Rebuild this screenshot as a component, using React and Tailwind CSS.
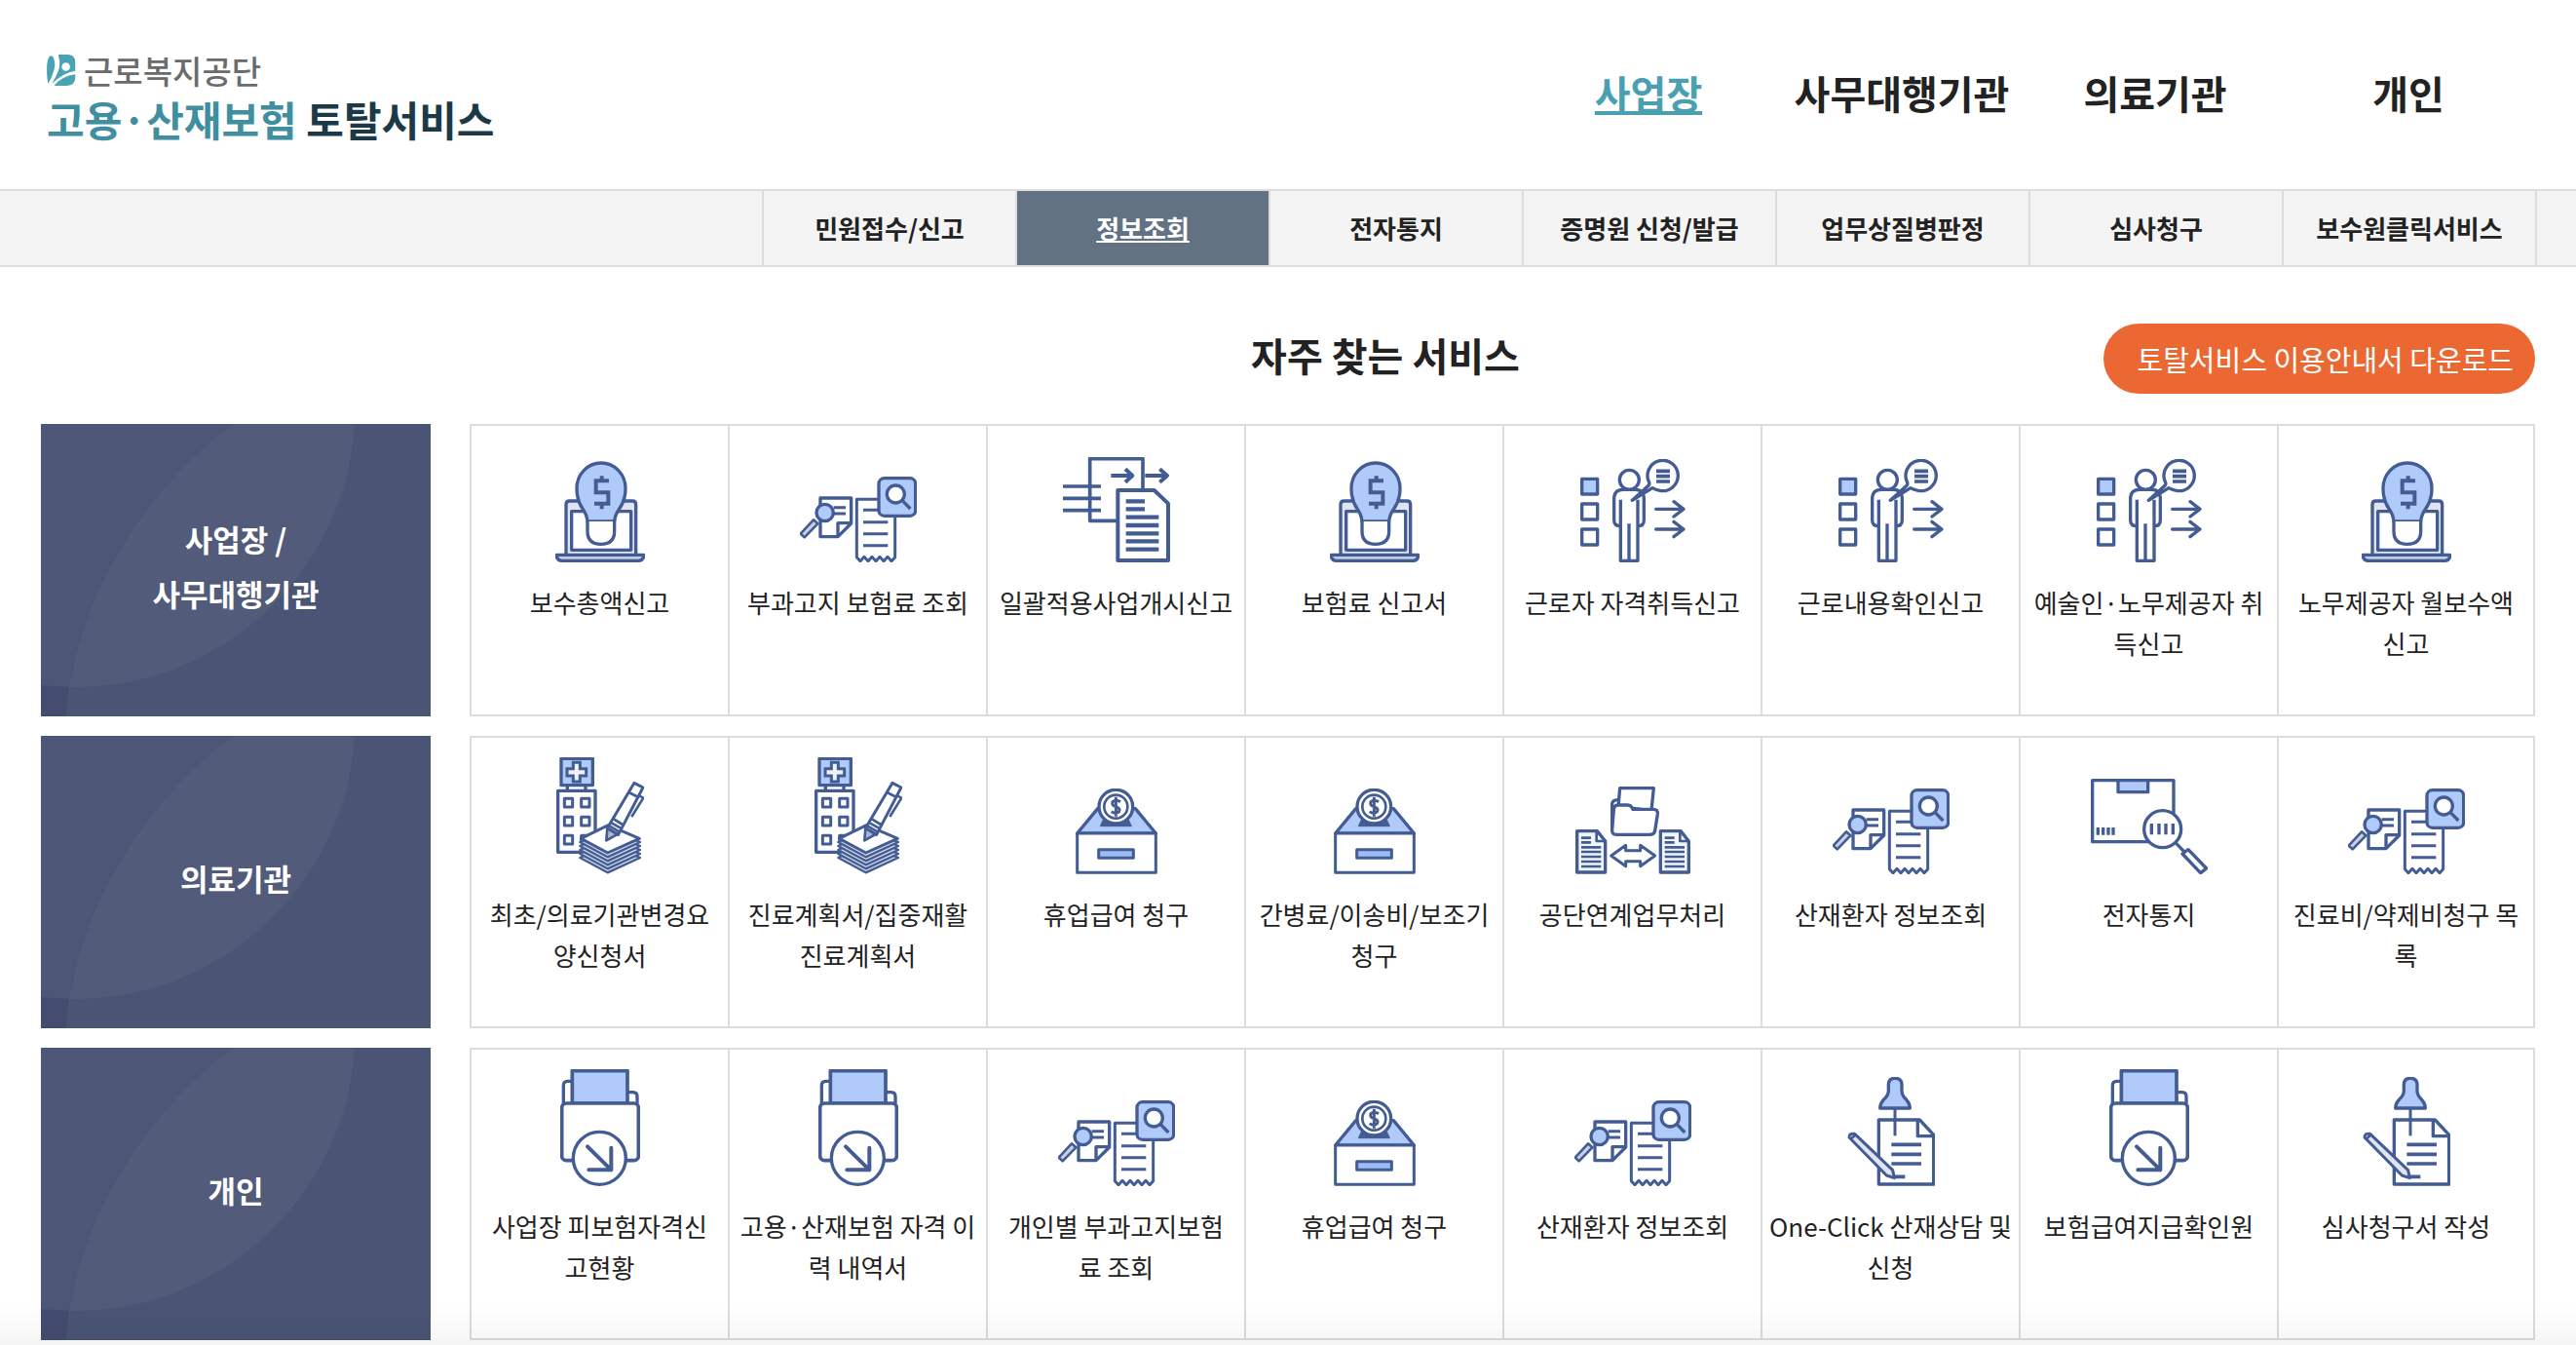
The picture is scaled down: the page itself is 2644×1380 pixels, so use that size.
const FILL = "#b0cafa";

const Icon = ({ width, height, children }) => (
  <svg
    width={width}
    height={height}
    viewBox={`0 0 ${width * 3} ${height * 3}`}
    fill="none"
    stroke="#435c93"
    strokeWidth="10"
    strokeLinejoin="round"
    aria-hidden="true"
  >
    {children}
  </svg>
);

const BulbIcon = () => (
  <Icon width={92} height={104}>
    <path d="M33 290V134Q33 123 44 123H237Q248 123 248 134V290" fill="#dfe4f0" />
    <rect x="50" y="155" width="183" height="119" fill="#fff" />
    <path d="M4 289H272Q272 307 256 307H20Q4 307 4 289Z" fill="#c3cde2" />
    <path
      d="M99 186Q97 165 84 147Q66 121 66 84A75 78 0 0 1 216 84Q216 121 197 147Q184 165 182 186Z"
      fill={FILL}
    />
    <path d="M99 186V216Q99 256 140 256Q182 256 182 216V186" fill="#fff" />
    <path d="M165 61H125V97H163V131H120M143 46V61M143 131V148" strokeWidth="12" strokeLinejoin="miter" />
  </Icon>
);

const ReceiptIcon = () => (
  <Icon width={120} height={88}>
    <path d="M63 66H158V144L117 185H63Z" fill="#fff" />
    <path d="M117 183V143H158" />
    <path d="M104 95H141M104 114H141" strokeWidth="9" />
    <path d="M42 133L55 145L14 187L2 176Z" fill="#c9d0e2" strokeWidth="8" />
    <circle cx="77" cy="111" r="26" fill={FILL} />
    <path
      d="M175 70H293V248L282 260L270 247L258 260L246 247L234 260L222 247L210 260L198 247L186 260L175 248Z"
      fill="#fff"
      strokeWidth="9"
    />
    <path d="M195 103H250M195 140H271M195 176H271M195 212H271" strokeWidth="9" />
    <rect x="243" y="5" width="113" height="116" rx="17" fill={FILL} />
    <circle cx="295" cy="54" r="27" fill="#fff" />
    <path d="M315 73L340 99" />
  </Icon>
);

const TransferDocIcon = () => (
  <Icon width={110} height={108}>
    <path d="M169 196H83V5H246V102" strokeWidth="11" />
    <path d="M0 90H117M0 127H117M0 164H117" strokeWidth="11" />
    <path d="M148 57H214M192 37L214 57L192 77M253 57H321M298 37L321 57L298 77" strokeWidth="12" />
    <path d="M169 102H281L324 143V318H169Z" fill="#fff" strokeWidth="12" />
    <path
      d="M194 136H252M194 160H252M194 185H295M194 210H295M194 235H295M194 259H295M194 284H295"
      strokeWidth="13"
    />
  </Icon>
);

const PersonIcon = () => (
  <Icon width={108} height={106}>
    <rect x="5" y="61" width="48" height="47" fill={FILL} />
    <rect x="5" y="138" width="48" height="48" />
    <rect x="5" y="216" width="48" height="48" />
    <circle cx="151" cy="64" r="30" />
    <path d="M124 206Q104 206 104 188V122Q104 94 132 94H170Q196 94 196 122V188Q196 206 177 206" />
    <path d="M124 125V313H177V125M150 199V313" />
    <path
      d="M245 97A47 47 0 1 0 212 72Q214 78 210 82L160 127L222 89Q232 95 245 97Z"
      fill="#fff"
    />
    <path d="M234 37H276M234 53H276M234 69H276" strokeWidth="11" />
    <path
      d="M233 154H318M288 131L318 154L288 177M233 216H318M288 193L318 216L288 239"
      strokeLinecap="round"
    />
  </Icon>
);

const HospitalIcon = () => (
  <Icon width={90} height={120}>
    <path d="M34 86V103M90 86V103" />
    <rect x="15" y="4" width="97" height="82" fill={FILL} />
    <path
      d="M52 16H73V35H92V57H73V75H52V57H33V35H52Z"
      fill="#eef2fb"
      strokeWidth="9"
      strokeLinejoin="miter"
    />
    <rect x="5" y="103" width="115" height="189" fill="#fff" />
    <g strokeWidth="9">
      <rect x="25" y="127" width="25" height="26" />
      <rect x="77" y="127" width="25" height="26" />
      <rect x="25" y="184" width="25" height="26" />
      <rect x="77" y="184" width="25" height="26" />
      <rect x="25" y="241" width="25" height="26" />
      <path d="M77 262V241H102" />
    </g>
    <g fill="#d3daea" strokeWidth="7">
      <path d="M73 309L160 267L258 309L158 355Z" />
      <path d="M73 297L160 255L258 297L158 343Z" />
      <path d="M73 285L160 243L258 285L158 331Z" />
      <path d="M73 273L160 231L258 273L158 319Z" />
      <path d="M73 261L160 219L258 261L158 307Z" />
    </g>
    <path d="M76 250L160 209L256 250L158 294Z" fill="#fff" strokeWidth="9" />
    <path d="M154 256L157 218L190 236Z" fill="#aab7d3" strokeWidth="8" />
    <path d="M240 79L267 93L191 238L157 218Z" fill="#fff" strokeWidth="9" />
    <path d="M223 108L253 123M177 190L204 207M170 202L198 218M163 211L194 229" strokeWidth="8" />
    <path d="M254 118L268 125L232 183" strokeWidth="8" />
  </Icon>
);

const CoinBoxIcon = () => (
  <Icon width={84} height={88}>
    <path d="M5 138L68 62H184L247 138Z" fill={FILL} />
    <rect x="5" y="138" width="242" height="121" fill="#fff" strokeWidth="9" />
    <path d="M84 98H164L172 116H76Z" fill="#435c93" strokeWidth="3" />
    <circle cx="124" cy="56" r="52" fill="#fff" />
    <circle cx="124" cy="56" r="36" strokeWidth="8" />
    <path
      d="M138 41Q124 32 114 41Q109 52 124 56Q139 61 134 71Q124 80 110 71M124 26V86"
      strokeWidth="9"
    />
    <rect x="71" y="188" width="107" height="26" fill="#9dbcf3" strokeWidth="9" />
  </Icon>
);

const SharedDoc = () => (
  <>
    <path d="M5 137H67L92 168V264H5Z" fill="#f1f4fa" />
    <path d="M65 137V168H92" strokeWidth="8" />
    <path d="M18 158H48M18 172H48M18 187H79M18 201H79M18 216H79M18 231H79M18 246H79" strokeWidth="8" />
  </>
);

const FolderShareIcon = () => (
  <Icon width={118} height={90}>
    <path d="M113 130V54Q113 40 137 40" />
    <path d="M132 62L137 5H241L234 74Z" fill="#fff" />
    <path
      d="M131 57H161Q169 57 173 63L177 70H240Q255 70 253 85L245 136Q243 148 231 148H126Q112 148 113 134L118 72Q119 57 131 57Z"
      fill="#fff"
    />
    <SharedDoc />
    <g transform="translate(257 0)">
      <SharedDoc />
    </g>
    <path d="M110 213L155 181V197H200V181L245 213L200 245V230H155V245Z" strokeWidth="9" />
  </Icon>
);

const PackageIcon = () => (
  <Icon width={120} height={98}>
    <rect x="5" y="5" width="250" height="189" />
    <rect x="84" y="5" width="92" height="36" fill={FILL} />
    <path d="M22 150V173M38 150V173M54 150V173M69 150V173" />
    <circle cx="221" cy="155" r="57" fill="#fff" />
    <path d="M187 138V172M210 138V172M231 138V172M253 138V172" />
    <path d="M261 197L289 226" />
    <path d="M300 218L356 276L338 290L282 231Z" fill="#fff" />
  </Icon>
);

const FolderDownIcon = () => (
  <Icon width={82} height={120}>
    <path d="M10 105V50Q10 37 23 37H37M206 71H224Q237 71 237 84V105" />
    <rect x="37" y="5" width="170" height="100" fill={FILL} strokeWidth="11" />
    <rect x="5" y="105" width="236" height="176" rx="14" fill="#fff" strokeWidth="11" />
    <circle cx="121" cy="274" r="81" fill="#fff" />
    <path d="M84 238L157 310M157 242V310H88" strokeWidth="12" strokeLinecap="round" />
  </Icon>
);

const PinNoteIcon = () => (
  <Icon width={90} height={112}>
    <path d="M97 132H223L266 178V330H97Z" fill="#fff" />
    <path d="M217 132V182H266" />
    <path d="M136 208H228M136 238H228M136 267H228M146 307H178" strokeWidth="11" />
    <path d="M147 95V181" strokeWidth="9" />
    <path
      d="M127 24Q127 4 147 4Q168 4 168 24V44Q169 58 182 70Q193 82 193 96H101Q101 82 112 70Q126 58 127 44Z"
      fill={FILL}
    />
    <path d="M6 186Q6 172 23 175L140 287L145 311L121 303Z" fill="#dfe4f0" strokeWidth="9" />
    <path d="M12 190L27 177" strokeWidth="8" />
  </Icon>
);

const mainMenu = ["사업장", "사무대행기관", "의료기관", "개인"];

const subMenu = [
  "민원접수/신고",
  "정보조회",
  "전자통지",
  "증명원 신청/발급",
  "업무상질병판정",
  "심사청구",
  "보수원클릭서비스",
];

const groups = [
  {
    title: "사업장 /\n사무대행기관",
    items: [
      { label: "보수총액신고", icon: BulbIcon },
      { label: "부과고지 보험료 조회", icon: ReceiptIcon },
      { label: "일괄적용사업개시신고", icon: TransferDocIcon },
      { label: "보험료 신고서", icon: BulbIcon },
      { label: "근로자 자격취득신고", icon: PersonIcon },
      { label: "근로내용확인신고", icon: PersonIcon },
      { label: "예술인·노무제공자 취\n득신고", icon: PersonIcon },
      { label: "노무제공자 월보수액\n신고", icon: BulbIcon },
    ],
  },
  {
    title: "의료기관",
    items: [
      { label: "최초/의료기관변경요\n양신청서", icon: HospitalIcon },
      { label: "진료계획서/집중재활\n진료계획서", icon: HospitalIcon },
      { label: "휴업급여 청구", icon: CoinBoxIcon },
      { label: "간병료/이송비/보조기\n청구", icon: CoinBoxIcon },
      { label: "공단연계업무처리", icon: FolderShareIcon },
      { label: "산재환자 정보조회", icon: ReceiptIcon },
      { label: "전자통지", icon: PackageIcon },
      { label: "진료비/약제비청구 목\n록", icon: ReceiptIcon },
    ],
  },
  {
    title: "개인",
    items: [
      { label: "사업장 피보험자격신\n고현황", icon: FolderDownIcon },
      { label: "고용·산재보험 자격 이\n력 내역서", icon: FolderDownIcon },
      { label: "개인별 부과고지보험\n료 조회", icon: ReceiptIcon },
      { label: "휴업급여 청구", icon: CoinBoxIcon },
      { label: "산재환자 정보조회", icon: ReceiptIcon },
      { label: "One-Click 산재상담 및\n신청", icon: PinNoteIcon },
      { label: "보험급여지급확인원", icon: FolderDownIcon },
      { label: "심사청구서 작성", icon: PinNoteIcon },
    ],
  },
];

const Logo = () => (
  <a href="#" className="block font-bold leading-[50px]">
    <span className="flex items-center gap-2 text-[33px] font-medium text-[#6b6b6b]">
      <svg width="30" height="32" viewBox="0 0 84 90" aria-hidden="true">
        <path d="M12 3Q24 8 23 32Q20 55 4 84Q0 70 0 40Q0 8 12 3Z" fill="#4aa3b3" />
        <path
          d="M33 0H62Q82 2 82 22V47Q48 52 15 84Q30 58 36 38Q39 18 33 0Z"
          fill="#4aa3b3"
        />
        <path d="M22 88Q45 62 82 57V66Q82 88 58 90H24Z" fill="#4aa3b3" />
        <circle cx="55" cy="35" r="12" fill="#fff" />
      </svg>
      근로복지공단
    </span>
    <span className="block text-[42px] text-[#1b3946]">
      <span className="text-[#3f8fa0]">고용·산재보험</span> 토탈서비스
    </span>
  </a>
);

const Header = () => (
  <header className="flex items-center justify-between py-[47px] pl-12 pr-[42px]">
    <Logo />
    <nav aria-label="주메뉴" className="pb-1">
      <ul className="flex text-center text-[40px] font-bold leading-[60px]">
        {mainMenu.map((item, i) => (
          <li key={item} className="w-[260px]">
            <a
              href="#"
              className={
                i === 0
                  ? "text-[#4aa0b1] underline decoration-4 underline-offset-2 [text-decoration-skip-ink:none]"
                  : ""
              }
            >
              {item}
            </a>
          </li>
        ))}
      </ul>
    </nav>
  </header>
);

const SubNav = () => (
  <nav aria-label="하위메뉴" className="flex justify-end border-y-2 border-[#dcdcdc] bg-[#f4f4f4] pr-10">
    <ul className="flex border-r-2 border-[#dcdcdc] text-center text-[26px] font-bold leading-[76px]">
      {subMenu.map((item, i) => (
        <li key={item} className="w-[260px] border-l-2 border-[#dcdcdc]">
          <a
            href="#"
            className={
              i === 1
                ? "block bg-[#637283] text-white underline decoration-2 underline-offset-2 [text-decoration-skip-ink:none]"
                : "block"
            }
          >
            {item}
          </a>
        </li>
      ))}
    </ul>
  </nav>
);

const GroupTitle = ({ children }) => (
  <h3 className="relative flex w-[400px] shrink-0 items-center justify-center overflow-hidden bg-[#444d70] pb-2">
    <svg
      className="absolute inset-0 h-full w-full"
      viewBox="0 0 1200 900"
      preserveAspectRatio="none"
      aria-hidden="true"
    >
      <circle cx="104" cy="-54" r="864" fill="#4c5777" />
      <path d="M594 0C340 190 100 500 77 900H1200V0Z" fill="#4a5474" />
      <path d="M594 0C370 160 140 460 88 810A864 864 0 0 0 966 0Z" fill="#535b7a" />
    </svg>
    <span className="relative whitespace-pre-line text-center text-[31px] font-bold leading-[56px] text-white">
      {children}
    </span>
  </h3>
);

const ServiceGroup = ({ title, items }) => (
  <section className="flex gap-10">
    <GroupTitle>{title}</GroupTitle>
    <ul className="grid min-h-[300px] flex-1 grid-cols-8">
      {items.map(({ label, icon: ItemIcon }, i) => (
        <li key={i} className="border-y-2 border-l-2 border-[#dcdcdc] last:border-r-2">
          <a href="#" className="flex h-full flex-col items-center gap-5 px-1 pt-5">
            <span className="flex h-[120px] items-end">
              <ItemIcon />
            </span>
            <span className="whitespace-pre-line text-center text-[26px] leading-[42px]">
              {label}
            </span>
          </a>
        </li>
      ))}
    </ul>
  </section>
);

const App = () => {
  return (
    <div className="min-h-screen bg-white font-['Noto_Sans_CJK_KR',sans-serif] text-[#222]">
      <Header />
      <SubNav />
      <main className="px-[42px] pb-[5px] pt-[58px]">
        <div className="mb-[31px] grid grid-cols-[1fr_auto_1fr] items-start pl-[200px]">
          <h2 className="col-start-2 text-[40px] font-bold leading-[64px]">자주 찾는 서비스</h2>
          <button
            type="button"
            className="justify-self-end rounded-full bg-[#ec6832] pl-[34px] pr-[22px] text-[29px] leading-[72px] text-white"
          >
            토탈서비스 이용안내서 다운로드
          </button>
        </div>
        <div className="flex flex-col gap-5">
          {groups.map((group) => (
            <ServiceGroup key={group.title} {...group} />
          ))}
        </div>
      </main>
      {/* soft shade along the bottom edge of the window */}
      <div className="pointer-events-none fixed inset-x-0 bottom-0 h-10 bg-linear-to-b from-transparent to-black/4" />
    </div>
  );
};

export default App;
